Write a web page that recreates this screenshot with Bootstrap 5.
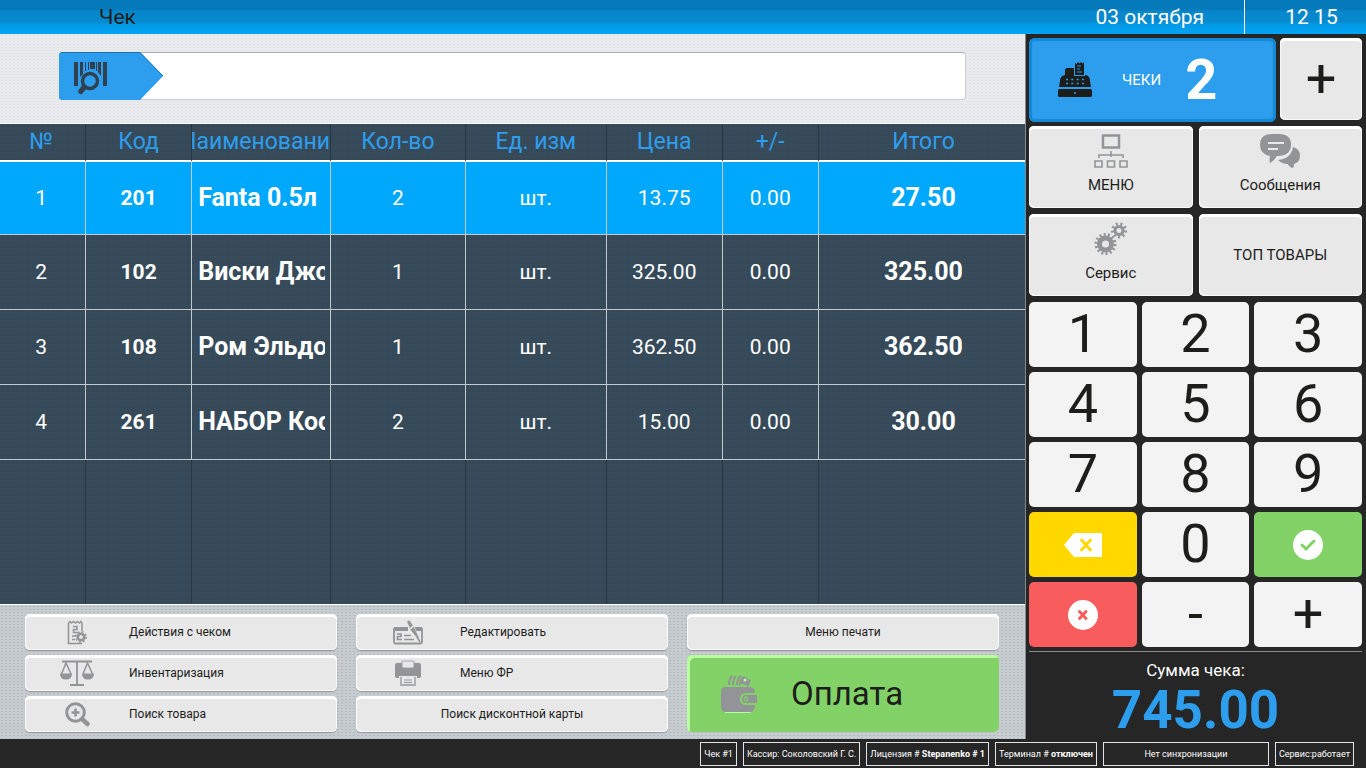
<!DOCTYPE html>
<html lang="ru">
<head>
<meta charset="utf-8">
<meta name="viewport" content="width=device-width, initial-scale=1">
<title>Чек</title>
<link href="https://cdn.jsdelivr.net/npm/bootstrap@5.3.0/dist/css/bootstrap.min.css" rel="stylesheet">
<style>
  :root { --pos-blue: #2d9eee; --pos-sky: #00a8fb; --pos-dark: #262626; --pos-slate: #364958; }
  body { font-family: Roboto, "Liberation Sans", sans-serif; background: var(--pos-dark); color: #1d1d1b; }
  button { font-family: inherit; color: inherit; }
  svg { display: block; flex: none; }

  .topbar { height: 34px; font-size: 21px; line-height: 34px;
    background: linear-gradient(#0479ba 0 9px, #0888cc 12px 21px, #029be6 25px, #00a4f6 34px); }
  .topbar-title { padding-left: 99px; }
  .topbar-date { padding-right: 40px; }
  .topbar-time { width: 122px; padding-left: 12px; border-left: 1px solid #fff; }

  .workspace { display: grid; grid-template-columns: minmax(0, 1fr) 340px; }
  .receipt { border-right: 1px solid #85898c; }

  .scan-area { padding: 18px 59px 23px; border-bottom: 1px solid #fff; background-color: #e9eaee;
    background-image: radial-gradient(#dfe1e4 1px, transparent 1px); background-size: 4px 3px; }
  .scan-box { height: 48px; background: #fff; border: 1px solid #c9ced2; border-top-color: #a9aeb2; border-radius: 4px; }
  .scan-box input { border: 0; background: transparent; font-size: 21px; outline: 0; }
  .scan-tag { width: 104px; height: 48px; margin: -1px 0 -1px -1px; }

  .receipt-table { table-layout: fixed; width: 100%; color: #fff; text-align: center; border-collapse: separate; border-spacing: 0;
    background-color: var(--pos-slate);
    background-image: repeating-linear-gradient(90deg, #ffffff03 0 1px, transparent 1px 5px), repeating-linear-gradient(#ffffff03 0 1px, transparent 1px 4px); }
  .receipt-table th, .receipt-table td { padding: 0; overflow: hidden; white-space: nowrap; border-right: 1px solid #c3cacf; border-bottom: 1px solid #c3cacf; vertical-align: middle; }
  .receipt-table tr > :first-child { padding-right: 3px; }
  .receipt-table tr > :last-child { border-right: 0; padding-left: 3px; }
  .receipt-table thead th { height: 38px; font-size: 23px; line-height: 34px; font-weight: 400; color: var(--pos-blue); border-right-color: #273840; border-bottom: 2px solid #fff; }
  .receipt-table tbody tr { height: 75px; }
  .receipt-table tbody tr:first-child { height: 73px; }
  .receipt-table td { font-size: 21px; line-height: 28px; }
  .receipt-table .row-active td { background: var(--pos-sky); }
  .receipt-table .cell-code { font-weight: 700; }
  .receipt-table .cell-name, .receipt-table .cell-total { font-size: 25px; font-weight: 700; }
  .cell-clip { margin: 0 5px 0 6px; overflow: hidden; text-align: left; }
  .receipt-table tbody .row-rest { height: 144px; }
  .receipt-table .row-rest td { border-right-color: #273840; border-bottom: 0; }

  .actions { display: grid; grid-template-columns: repeat(3, minmax(0, 1fr)); grid-auto-rows: 36px; gap: 5px 19px; padding: 9px 26px 7px 25px; border-top: 1px solid #fff;
    background-color: #c7ccd0; background-image: radial-gradient(#b3b8bd 1px, transparent 1px); background-size: 4px 3px; }
  .tile { border: 0; padding: 0; border-radius: 5px; background: #e8e8e8; box-shadow: inset 0 3px 0 #fff, inset 1px -1px 0 #fafafa, inset -1px 0 0 #fafafa; }
  .action { font-size: 12px; line-height: 18px; box-shadow: inset 0 3px 0 #fff, inset 1px -1px 0 #fafafa, inset -1px 0 0 #fafafa, 0 1px 1px #8f9499; }
  .action-split { display: grid; grid-template-columns: 1fr 2fr; align-items: center; justify-items: center; text-align: left; }
  .action-split span { justify-self: start; }
  .action-pay { grid-row: span 2; background: #83d268; font-size: 33px; line-height: 40px; box-shadow: inset 3px 3px 0 #b8fd9e; }

  .side { padding: 4px 4px 0 3px; }
  .checks { display: grid; grid-template-columns: minmax(0, 1fr) 82px; gap: 4px; align-items: start; }
  .checks-open { height: 84px; padding: 0 0 0 29px; color: #fff; border: 0; border-radius: 6px; background: var(--pos-blue); box-shadow: inset 0 0 1px 3px #1389d4; }
  .checks-label { margin: 0 24px 0 30px; }
  .checks-count { font-size: 56px; line-height: 60px; font-weight: 700; }
  .checks-add { height: 82px; }
  .label-text { font-size: 15px; line-height: 20px; }
  .menu-grid { display: grid; grid-template-columns: repeat(2, minmax(0, 1fr)); grid-auto-rows: 82px; gap: 6px; margin-top: 4px; }
  .tile-icon { display: flex; flex-direction: column; align-items: center; justify-content: flex-start; gap: 7px; padding-top: 8px; }
  .keypad { display: grid; grid-template-columns: repeat(3, minmax(0, 1fr)); grid-auto-rows: 65px; gap: 5px; margin-top: 6px; }
  .keypad button { display: flex; align-items: center; justify-content: center; border: 0; padding: 0; border-radius: 5px; background: #f3f3f3; }
  .keypad .key-text { padding-bottom: 2px; }
  .key-text { font-size: 54px; line-height: 62px; }
  .keypad .key-erase { background: #ffd800; }
  .keypad .key-ok { background: #83d268; }
  .keypad .key-cancel { background: #f85c5c; }
  .total { margin-top: 4px; padding-top: 6px; border-top: 1px solid #85898c; color: #fff; }
  .total-label { font-size: 17px; line-height: 24px; }
  .total-sum { font-size: 53px; line-height: 56px; font-weight: 700; color: var(--pos-blue); }

  .status { gap: 6px; padding: 3px 12px 2px; font-size: 9px; line-height: 22px; color: #fff; }
  .status-item { border: 1px solid #dfe3e5; padding: 0 3px; white-space: nowrap; }
  .status-sync { width: 166px; text-align: center; }
</style>
</head>
<body class="min-vh-100 d-flex flex-column">

<header class="topbar d-flex">
  <div class="topbar-title flex-grow-1">Чек</div>
  <div class="topbar-date text-white">03 октября</div>
  <div class="topbar-time text-white text-center">12 15</div>
</header>

<div class="workspace flex-grow-1">
  <main class="receipt d-flex flex-column">
    <div class="scan-area">
      <div class="scan-box d-flex">
        <label for="scan" class="scan-tag" aria-label="Штрихкод">
          <svg width="104" height="48" viewBox="0 0 104 48">
            <path d="M3 0H81L104 24 81 48H3Q0 48 0 45V3Q0 0 3 0Z" fill="#2d9eee"/>
            <path d="M2 .5H81L104 24" fill="none" stroke="#1674ad"/>
            <g fill="#2f4150">
              <path d="M15 10h4v24h-4zM44 10h4v24h-4zM21 10h3v12l-3 3zM26 10h1v9h-1zM29 10h1v8h-1zM31 10h5v7h-5zM37 10h1v9h-1zM39 10h3v14l-3-4z"/>
              <path d="M24 32l4 4-5 6q-3 1-4-3z"/>
            </g>
            <circle cx="31" cy="29" r="7.500" fill="#2d9eee" stroke="#2f4150" stroke-width="3.500"/>
          </svg>
        </label>
        <input id="scan" type="text" class="flex-grow-1">
      </div>
    </div>

    <div class="flex-grow-1 d-flex">
      <table class="receipt-table">
        <colgroup>
          <col style="width:8.4%"><col style="width:10.35%"><col style="width:13.55%"><col style="width:13.15%"><col style="width:13.75%"><col style="width:11.3%"><col style="width:9.4%"><col>
        </colgroup>
        <thead>
          <tr><th>№</th><th>Код</th><th><div class="d-flex justify-content-center overflow-hidden">Наименование</div></th><th>Кол-во</th><th>Ед. изм</th><th>Цена</th><th>+/-</th><th>Итого</th></tr>
        </thead>
        <tbody>
          <tr class="row-active"><td>1</td><td class="cell-code">201</td><td class="cell-name"><div class="cell-clip">Fanta 0.5л</div></td><td>2</td><td>шт.</td><td>13.75</td><td>0.00</td><td class="cell-total">27.50</td></tr>
          <tr><td>2</td><td class="cell-code">102</td><td class="cell-name"><div class="cell-clip">Виски Джо</div></td><td>1</td><td>шт.</td><td>325.00</td><td>0.00</td><td class="cell-total">325.00</td></tr>
          <tr><td>3</td><td class="cell-code">108</td><td class="cell-name"><div class="cell-clip">Ром Эльдо</div></td><td>1</td><td>шт.</td><td>362.50</td><td>0.00</td><td class="cell-total">362.50</td></tr>
          <tr><td>4</td><td class="cell-code">261</td><td class="cell-name"><div class="cell-clip">НАБОР Кос</div></td><td>2</td><td>шт.</td><td>15.00</td><td>0.00</td><td class="cell-total">30.00</td></tr>
          <tr class="row-rest"><td></td><td></td><td></td><td></td><td></td><td></td><td></td><td></td></tr>
        </tbody>
      </table>
    </div>

    <div class="actions">
      <button type="button" class="tile action action-split">
        <svg width="20" height="25" viewBox="0 0 20 25" fill="none" stroke="#929497" stroke-width="1.500">
          <path d="M15 11V3M9 23.500H1.500V3"/><path d="M1.500 3l1.500-1.500 1.500 1.500 2-1.500 2 1.500 2-1.500 2 1.500 1.500-1.500 1 1.500"/>
          <path d="M6 6.500h4v3H6.500v3H11M5 16h4M5 19.500h3M9 23.500h6"/>
          <circle cx="14" cy="17" r="3.200" stroke-width="2.600"/><circle cx="14" cy="17" r="5.200" stroke-dasharray="2 2.080"/>
        </svg>
        <span>Действия с чеком</span>
      </button>
      <button type="button" class="tile action action-split">
        <svg width="30" height="25" viewBox="0 0 30 25" fill="none" stroke="#929497">
          <path d="M14 8H2.500Q1 8 1 9.500V22q0 1.500 1.500 1.500h25Q29 23.500 29 22V9.500Q29 8 27.500 8H22" stroke-width="1.800"/>
          <path d="M1 7h14v4H1zM21 7h8v4h-6z" fill="#929497" stroke="none"/>
          <path d="M4 14h4v2.500H4.500v3H9M11 15.500h7M11 19.500h10" stroke-width="1.600"/>
          <path d="M14 2.500q0-3 3-2l3 5-3 3zM17 9.500l4-3 5 11-1 2z" fill="#929497" stroke="#e8e8e8" stroke-width=".6"/>
          <path d="M24 17l3 5" stroke-width="1.500"/>
        </svg>
        <span>Редактировать</span>
      </button>
      <button type="button" class="tile action">Меню печати</button>

      <button type="button" class="tile action action-split">
        <svg width="34" height="26" viewBox="0 0 34 26" fill="none" stroke="#929497">
          <path d="M2 1.500h30M17 1v24M10 25h14" stroke-width="1.800"/>
          <path d="M1.500 14L6 3l5 11M23 14l4.500-11L32.500 14" stroke-width="1.500"/>
          <path d="M0 13.500h12q0 6-6 6t-6-6zM22 13.500h12q0 6-6 6t-6-6z" fill="#929497" stroke="none"/>
        </svg>
        <span>Инвентаризация</span>
      </button>
      <button type="button" class="tile action action-split">
        <svg width="26" height="26" viewBox="0 0 26 26">
          <path d="M2 3h22q2 0 2 2v11q0 2-2 2H2q-2 0-2-2V5q0-2 2-2z" fill="#929497"/>
          <path d="M7 2q0-1 1-1h10q1 0 1 1v4q0 2-2 2H9Q7 8 7 6z" fill="#e8e8e8" stroke="#a5a7aa" stroke-width="1.200"/>
          <path d="M4 16h18v4H4z" fill="#e8e8e8"/>
          <path d="M6 17v8h14v-8" fill="#e8e8e8" stroke="#929497" stroke-width="1.300"/>
          <path d="M9 20h8M9 22.500h8" stroke="#929497"/>
        </svg>
        <span>Меню ФР</span>
      </button>
      <button type="button" class="tile action-pay action-split">
        <svg width="36" height="38" viewBox="0 0 36 38" fill="none" stroke="#929497">
          <path d="M8 10q0-6 3-9M12 10q0-6 3-9M16 10q0-6 4-9" stroke-width="2"/>
          <path d="M18 11q0-8 5-10 3 3 7 4l-3 7q-2-3-5-3t-3 2z" fill="#929497" stroke="none"/><circle cx="24" cy="5" r="1.500" fill="#b8fd9e" stroke="none"/>
          <path d="M5 12h24q5 0 5 6H25q-6 0-6 6t6 6h9q0 7-5 7H5q-5 0-5-5V17q0-5 5-5z" fill="#929497" stroke="none"/>
          <path d="M25 20h11v8H25q-4 0-4-4t4-4z" fill="#929497" stroke="none"/>
          <circle cx="25" cy="24" r="1.800" stroke="#83d268" stroke-width="1.200"/>
          <path d="M4 37.500h26" stroke="#b8fd9e"/>
        </svg>
        <span>Оплата</span>
      </button>

      <button type="button" class="tile action action-split">
        <svg width="25" height="25" viewBox="0 0 25 25" fill="none" stroke="#929497">
          <circle cx="10.500" cy="10.500" r="8.800" stroke-width="3"/><path d="M10.500 6.500v8M6.500 10.500h8" stroke-width="2.500"/>
          <path d="M17 17l5.500 5" stroke-width="4.500" stroke-linecap="round"/>
        </svg>
        <span>Поиск товара</span>
      </button>
      <button type="button" class="tile action">Поиск дисконтной карты</button>
    </div>
  </main>

  <aside class="side">
    <div class="checks">
      <button type="button" class="checks-open d-flex align-items-center">
        <svg width="34" height="36" viewBox="0 0 34 36" fill="#1d1d1b">
          <path d="M7 8q0-2 2-2h16v7h3q4 1 4 6l1 6H1l1-6q0-5 5-6z"/>
          <path d="M16 0h11v14H16z" fill="#2d9eee"/>
          <path d="M17 1l1.500 1L20 0l1.500 1.500L23 0l1.500 1.500L26 0v13h-9z"/>
          <path d="M19 4h4M19 7h3M19 10h5" stroke="#2d9eee" stroke-width="1.200"/>
          <path d="M8 17.500h18M8 21.500h18" stroke="#2d9eee" stroke-width="1.500" stroke-dasharray="2 3.300"/>
          <rect y="27" width="34" height="8" rx="1.500"/><path d="M17 30v2" stroke="#2d9eee" stroke-width="1.500"/>
        </svg>
        <span class="checks-label label-text">ЧЕКИ</span>
        <span class="checks-count">2</span>
      </button>
      <button type="button" class="tile checks-add key-text">+</button>
    </div>

    <div class="menu-grid">
      <button type="button" class="tile tile-icon">
        <svg width="34" height="34" viewBox="0 0 34 34" fill="none" stroke="#929497">
          <path d="M9 1.500h16v12H9z" stroke-width="2.500"/><path d="M17 17v6M5 24v-3h24v3" stroke-width="1.600"/>
          <path d="M1 27h7v6H1zM13.500 27h7v6h-7zM26 27h7v6h-7z" stroke-width="1.600"/>
        </svg>
        <span class="label-text">МЕНЮ</span>
      </button>
      <button type="button" class="tile tile-icon">
        <svg width="40" height="34" viewBox="0 0 40 34" fill="#929497">
          <path d="M12 0h7q12 0 12 10.500T19 22h-2q-3 5-7 7-1-3 0-7Q0 20 0 11 0 0 12 0z"/>
          <path d="M8 9h16M8 15h10" stroke="#e8e8e8" stroke-width="2"/>
          <path d="M33 13q7 2 7 9 0 6-6 8 0 3-1 4-4-1-5-4-6 0-10-4 13-1 15-13z"/>
        </svg>
        <span class="label-text">Сообщения</span>
      </button>
      <button type="button" class="tile tile-icon">
        <svg width="34" height="34" viewBox="0 0 34 34" fill="none" stroke="#929497">
          <circle cx="11.500" cy="22" r="6" stroke-width="5"/><circle cx="11.500" cy="22" r="9.500" stroke-width="3" stroke-dasharray="2 2.264"/>
          <circle cx="25" cy="8.500" r="4" stroke-width="3"/><circle cx="25" cy="8.500" r="6.600" stroke-width="3" stroke-dasharray="2 2.608"/>
        </svg>
        <span class="label-text">Сервис</span>
      </button>
      <button type="button" class="tile label-text">ТОП ТОВАРЫ</button>
    </div>

    <div class="keypad">
      <button type="button" class="key-text">1</button>
      <button type="button" class="key-text">2</button>
      <button type="button" class="key-text">3</button>
      <button type="button" class="key-text">4</button>
      <button type="button" class="key-text">5</button>
      <button type="button" class="key-text">6</button>
      <button type="button" class="key-text">7</button>
      <button type="button" class="key-text">8</button>
      <button type="button" class="key-text">9</button>
      <button type="button" class="key-erase" aria-label="Стереть">
        <svg width="38" height="24" viewBox="0 0 38 24"><path d="M10 0h28v24H10L0 12z" fill="#fff"/><path d="M17.500 7l9 10M26.500 7l-9 10" stroke="#ffd800" stroke-width="2.800" stroke-linecap="round"/></svg>
      </button>
      <button type="button" class="key-text">0</button>
      <button type="button" class="key-ok" aria-label="Принять">
        <svg width="30" height="30" viewBox="0 0 30 30"><circle cx="15" cy="15" r="15" fill="#fff"/><path d="M9 15l4 4 8-8" fill="none" stroke="#83d268" stroke-width="3" stroke-linecap="round"/></svg>
      </button>
      <button type="button" class="key-cancel" aria-label="Отменить">
        <svg width="30" height="30" viewBox="0 0 30 30"><circle cx="15" cy="15" r="15" fill="#fff"/><path d="M11.500 11.500l6.500 7M18 11.500l-6.500 7" stroke="#f85c5c" stroke-width="3" stroke-linecap="round"/></svg>
      </button>
      <button type="button" class="key-text">-</button>
      <button type="button" class="key-text">+</button>
    </div>

    <div class="total text-center">
      <div class="total-label">Сумма чека:</div>
      <div class="total-sum">745.00</div>
    </div>
  </aside>
</div>

<footer class="status d-flex justify-content-end">
  <div class="status-item">Чек #1</div>
  <div class="status-item">Кассир: Соколовский Г. С.</div>
  <div class="status-item">Лицензия # <b>Stepanenko # 1</b></div>
  <div class="status-item">Терминал # <b>отключен</b></div>
  <div class="status-item status-sync">Нет синхронизации</div>
  <div class="status-item">Сервис:работает</div>
</footer>

<script src="https://cdn.jsdelivr.net/npm/bootstrap@5.3.0/dist/js/bootstrap.bundle.min.js"></script>
</body>
</html>
